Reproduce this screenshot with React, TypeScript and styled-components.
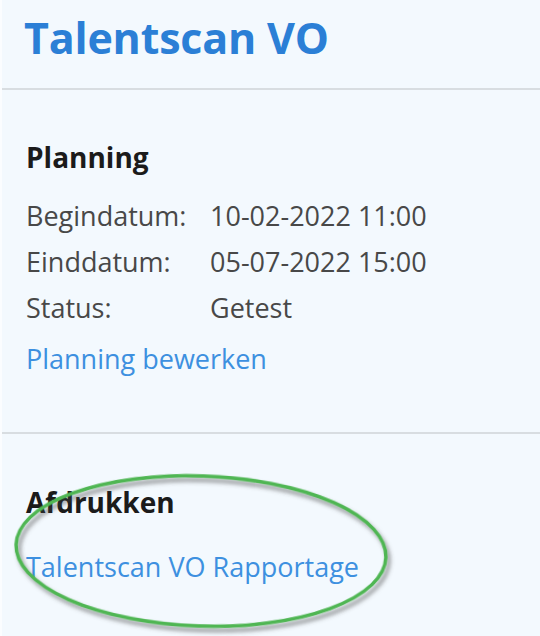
import React from "react";
import styled, { createGlobalStyle } from "styled-components";

const GlobalStyle = createGlobalStyle`
  html, body {
    margin: 0;
    padding: 0;
    background: #f3f9fe;
  }
  body {
    font-family: "Open Sans", "Noto Sans", sans-serif;
  }
`;

const Panel = styled.div`
  position: relative;
  width: 540px;
  min-height: 636px;
  box-sizing: border-box;
  border-left: 2px solid #fbfdff;
  background: #f3f9fe;
  overflow: hidden;
`;

const Header = styled.div`
  height: 90px;
  box-sizing: border-box;
  padding: 13px 22px 0;
  border-bottom: 2px solid #d8dde1;
`;

const Title = styled.h1`
  margin: 0;
  font-size: 43px;
  line-height: 50px;
  font-weight: 700;
  color: #2b7fd6;
  letter-spacing: -0.2px;
`;

const Section = styled.section<{ $last?: boolean }>`
  box-sizing: border-box;
  padding: ${(p) => (p.$last ? "49px 24px 0" : "48px 24px 0")};
  height: ${(p) => (p.$last ? "auto" : "344px")};
  border-bottom: ${(p) => (p.$last ? "none" : "2px solid #d8dde1")};
`;

const Heading = styled.h2`
  margin: 0 0 17px;
  font-size: 28px;
  line-height: 38px;
  font-weight: 700;
  color: #1b1b1b;
`;

const InfoGrid = styled.div`
  display: grid;
  grid-template-columns: 184px auto;
  font-size: 27px;
  line-height: 46px;
  color: #484848;
`;

// margin-top collapses with the heading's margin-bottom when it follows a heading
const Link = styled.a<{ $gap?: number }>`
  display: block;
  margin-top: ${(p) => p.$gap ?? 5}px;
  font-size: 27px;
  line-height: 46px;
  color: #3d90e0;
  text-decoration: none;
  cursor: pointer;
`;

const Annotation = styled.svg`
  position: absolute;
  left: 0;
  top: 0;
  pointer-events: none;
`;

const rows = [
  ["Begindatum:", "10-02-2022 11:00"],
  ["Einddatum:", "05-07-2022 15:00"],
  ["Status:", "Getest"],
];

export default function App() {
  return (
    <>
      <GlobalStyle />
      <Panel>
        <Header>
          <Title>Talentscan VO</Title>
        </Header>
        <Section>
          <Heading>Planning</Heading>
          <InfoGrid>
            {rows.map(([label, value]) => (
              <React.Fragment key={label}>
                <span>{label}</span>
                <span>{value}</span>
              </React.Fragment>
            ))}
          </InfoGrid>
          <Link>Planning bewerken</Link>
        </Section>
        <Section $last>
          <Heading>Afdrukken</Heading>
          <Link $gap={23}>Talentscan VO Rapportage</Link>
        </Section>
        <Annotation width="540" height="636" viewBox="0 0 540 636">
          <defs>
            <filter id="shade" x="-10%" y="-20%" width="130%" height="150%">
              <feDropShadow dx="3" dy="4" stdDeviation="2" floodColor="#444" floodOpacity="0.6" />
            </filter>
          </defs>
          <ellipse
            cx="199"
            cy="551"
            rx="185"
            ry="75"
            transform="rotate(2 199 551)"
            fill="none"
            stroke="#4fb653"
            strokeWidth="3.5"
            filter="url(#shade)"
          />
        </Annotation>
      </Panel>
    </>
  );
}
